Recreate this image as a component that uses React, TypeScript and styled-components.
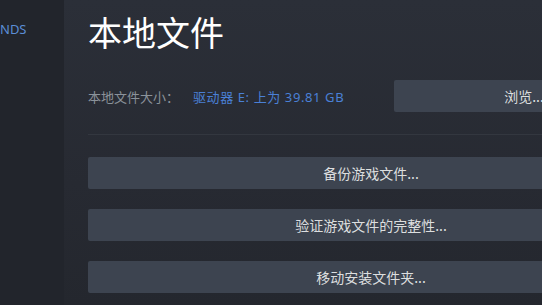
import styled, { createGlobalStyle } from "styled-components";

const GlobalStyle = createGlobalStyle`
  html, body {
    margin: 0;
    padding: 0;
    width: 542px;
    height: 305px;
    overflow: hidden;
    background: #23262d;
  }
  * {
    box-sizing: border-box;
  }
`;

const Page = styled.div`
  display: flex;
  width: 542px;
  height: 305px;
  overflow: hidden;
  font-family: "Noto Sans", "Noto Sans CJK SC", sans-serif;
`;

const Sidebar = styled.div`
  flex: 0 0 64px;
  width: 64px;
  background: #22252c;
  padding-top: 20px;
  overflow: hidden;
`;

const SideItem = styled.div`
  font-size: 13px;
  line-height: 18px;
  color: #5b8dd6;
  white-space: nowrap;
`;

const Main = styled.div`
  flex: 0 0 auto;
  width: 614px;
  padding: 15px 24px 0 24px;
  background: linear-gradient(180deg, #2b2f38 0%, #272a32 60%, #24272e 100%);
`;

const Title = styled.h1`
  margin: 0;
  font-family: "Noto Sans CJK SC", sans-serif;
  font-size: 34px;
  line-height: 34px;
  font-weight: 400;
  color: #ffffff;
`;

const SizeRow = styled.div`
  display: flex;
  align-items: center;
  width: 566px;
  margin-top: 31px;
`;

const Label = styled.span`
  font-size: 13px;
  color: #8b929a;
`;

const Value = styled.span`
  margin-left: 14px;
  font-size: 13px;
  letter-spacing: 0.6px;
  color: #4a80d6;
`;

const Spacer = styled.div`
  flex: 1;
`;

const Button = styled.button<{ $width?: number }>`
  display: flex;
  align-items: center;
  justify-content: center;
  width: ${(p) => (p.$width ? `${p.$width}px` : "566px")};
  height: 32px;
  padding: 0;
  border: none;
  border-radius: 2px;
  background: #3d4450;
  color: #dcdedf;
  font-family: "Noto Sans CJK SC", sans-serif;
  font-size: 14px;
  white-space: nowrap;
  cursor: pointer;
`;

const Separator = styled.div`
  width: 566px;
  height: 1px;
  margin: 22px 0;
  background: #33373f;
`;

const ButtonList = styled.div`
  display: flex;
  flex-direction: column;
  gap: 20px;
`;

export default function App() {
  return (
    <>
      <GlobalStyle />
      <Page>
        <Sidebar>
          <SideItem>NDS</SideItem>
        </Sidebar>
        <Main>
          <Title>本地文件</Title>
          <SizeRow>
            <Label>本地文件大小：</Label>
            <Value>驱动器 E: 上为 39.81 GB</Value>
            <Spacer />
            <Button $width={260}>浏览...</Button>
          </SizeRow>
          <Separator />
          <ButtonList>
            <Button>备份游戏文件...</Button>
            <Button>验证游戏文件的完整性...</Button>
            <Button>移动安装文件夹...</Button>
          </ButtonList>
        </Main>
      </Page>
    </>
  );
}
